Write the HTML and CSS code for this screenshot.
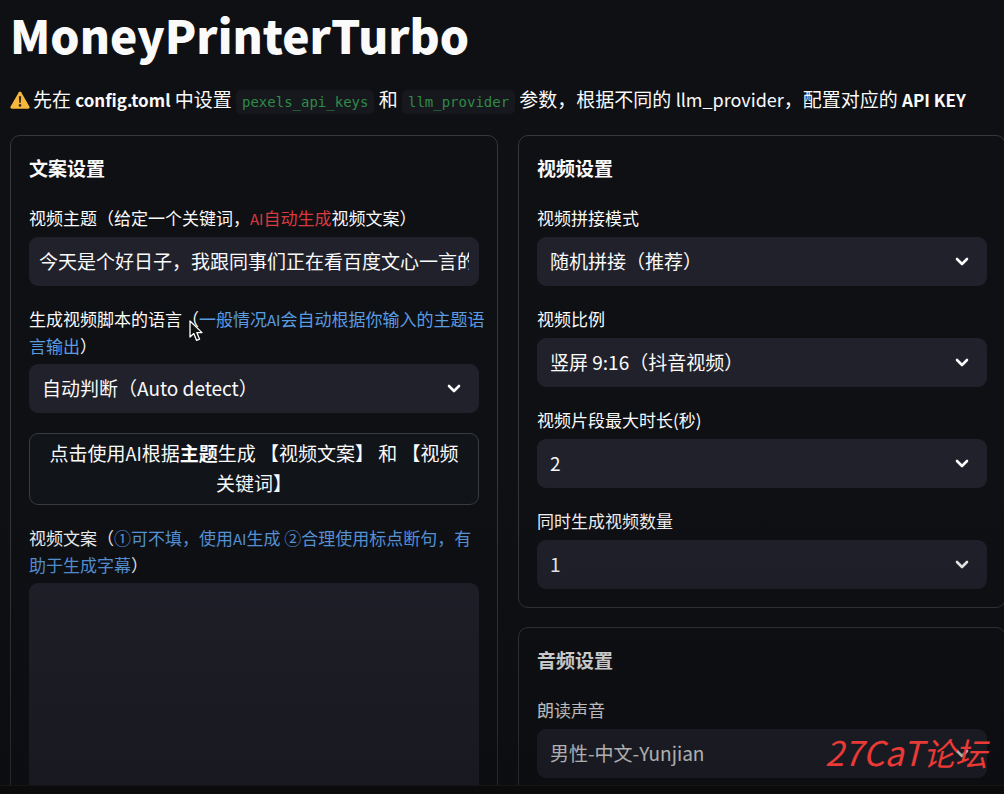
FILE: index.html
```html
<!DOCTYPE html>
<html lang="zh-CN">
<head>
  <meta charset="UTF-8">
  <meta name="viewport" content="width=device-width, initial-scale=1">
  <title>MoneyPrinterTurbo</title>
  <link rel="stylesheet" href="styles.css">
</head>
<body>
  <svg width="0" height="0" class="defs">
    <symbol id="chevron" viewBox="0 0 14 10">
      <path d="M2 2 L7 7 L12 2" fill="none" stroke="currentColor" stroke-width="2.6" stroke-linecap="round" stroke-linejoin="round"/>
    </symbol>
  </svg>

  <main class="app">
    <h1>MoneyPrinterTurbo</h1>
    <p class="notice">
      <svg class="warn" viewBox="0 0 20 18">
        <path d="M8.8 1.2 Q10 -.4 11.2 1.2 L19.4 15.6 Q20.2 17.6 18.2 17.8 H1.8 Q-.2 17.6 .6 15.6 Z" fill="#f6b73c"/>
        <path d="M8.8 5.2 H11.2 L10.7 12 H9.3 Z" fill="#33291a"/>
        <circle cx="10" cy="14.4" r="1.3" fill="#33291a"/>
      </svg>先在 <b>config.toml</b> 中设置 <code>pexels_api_keys</code> 和 <code>llm_provider</code> 参数，根据不同的 <span class="latin">llm_provider</span>，配置对应的 <b>API KEY</b>
    </p>

    <div class="columns">
      <section class="panel">
        <h2>文案设置</h2>
        <div class="field">
          <label for="subject">视频主题（给定一个关键词，<span class="red"><span class="latin">AI</span>自动生成</span>视频文案）</label>
          <input type="text" id="subject" value="今天是个好日子，我跟同事们正在看百度文心一言的发布会">
        </div>
        <div class="field">
          <label for="language">生成视频脚本的语言（<span class="blue">一般情况<span class="latin">AI</span>会自动根据你输入的主题语<br>言输出</span>）</label>
          <div class="select">
            <select id="language"><option>自动判断（Auto detect）</option></select>
            <svg><use href="#chevron"/></svg>
          </div>
          <svg class="pointer" viewBox="0 0 14 22">
            <path d="M1 1 V17 L4.8 13.6 L7.6 20.4 L10.6 19.2 L7.8 12.6 H13 Z" fill="#111" stroke="#fff" stroke-width="1.3" stroke-linejoin="round"/>
          </svg>
        </div>
        <button type="button">点击使用<span class="latin">AI</span>根据<b>主题</b>生成 【视频文案】 和 【视频<br>关键词】</button>
        <div class="field">
          <label for="script">视频文案（<span class="blue">①可不填，使用<span class="latin">AI</span>生成 ②合理使用标点断句，有<br>助于生成字幕</span>）</label>
          <textarea id="script"></textarea>
        </div>
      </section>

      <div class="stack">
        <section class="panel">
          <h2>视频设置</h2>
          <div class="field">
            <label for="concat">视频拼接模式</label>
            <div class="select">
              <select id="concat"><option>随机拼接（推荐）</option></select>
              <svg><use href="#chevron"/></svg>
            </div>
          </div>
          <div class="field">
            <label for="aspect">视频比例</label>
            <div class="select">
              <select id="aspect"><option>竖屏 9:16（抖音视频）</option></select>
              <svg><use href="#chevron"/></svg>
            </div>
          </div>
          <div class="field">
            <label for="duration">视频片段最大时长(秒)</label>
            <div class="select">
              <select id="duration"><option>2</option></select>
              <svg><use href="#chevron"/></svg>
            </div>
          </div>
          <div class="field">
            <label for="count">同时生成视频数量</label>
            <div class="select">
              <select id="count"><option>1</option></select>
              <svg><use href="#chevron"/></svg>
            </div>
          </div>
        </section>

        <section class="panel">
          <h2>音频设置</h2>
          <div class="field">
            <label for="voice">朗读声音</label>
            <div class="select">
              <select id="voice"><option>男性-中文-Yunjian</option></select>
              <svg><use href="#chevron"/></svg>
            </div>
          </div>
        </section>
      </div>
    </div>
    <div class="fade"></div>
  </main>
  <div class="bottom-bar"></div>
  <div class="watermark">27CaT<span>论坛</span></div>
</body>
</html>
```
FILE: styles.css
```css
* {
  box-sizing: border-box;
}

body {
  margin: 0;
  height: 100vh;
  display: flex;
  flex-direction: column;
  overflow: hidden;
  position: relative;
  background: #0f1014;
  color: #fafafa;
  font-family: "Noto Sans CJK SC", sans-serif;
  font-size: 19px;
}

.defs {
  position: absolute;
}

.app {
  flex: 1;
  min-height: 0;
  overflow: hidden;
  position: relative;
  padding: 0 0 0 10px;
}

.bottom-bar {
  flex: none;
  height: 9px;
  background: #0b0b0b;
  border-top: 1px solid #151515;
}

h1 {
  margin: 0;
  font-size: 46px;
  line-height: 68px;
  font-weight: 900;
}

.notice {
  margin: 16px 0 0;
  line-height: 30px;
  white-space: nowrap;
}

.warn {
  width: 20px;
  height: 18px;
  margin-right: 3px;
  vertical-align: -2px;
}

.latin {
  font-size: 18px;
}

.notice b {
  font-size: 17px;
}

code {
  padding: 4px 6px;
  border-radius: 5px;
  background: #16181d;
  color: #2f8a47;
  font-family: "DejaVu Sans Mono", monospace;
  font-size: 14px;
}

.columns {
  display: grid;
  grid-template-columns: minmax(0, 1fr) minmax(0, 1fr);
  gap: 20px;
  margin: 18px -2px 0 0;
}

.stack {
  display: flex;
  flex-direction: column;
  gap: 19px;
}

.panel {
  display: flex;
  flex-direction: column;
  gap: 20px;
  padding: 18px;
  border: 1px solid #36373c;
  border-radius: 10px;
}

h2 {
  margin: 0 0 3px;
  font-size: 19px;
  line-height: 28px;
  font-weight: 700;
}

.field {
  display: flex;
  flex-direction: column;
  gap: 5px;
  position: relative;
}

label {
  min-height: 27px;
  font-size: 17px;
  line-height: 26px;
  white-space: nowrap;
}

label .latin {
  font-size: 15px;
}

.red {
  color: #d8393f;
}

.blue {
  color: #5b9be0;
}

input,
select,
textarea {
  display: block;
  width: 100%;
  height: 49px;
  border: 0;
  border-radius: 9px;
  background: #21212c;
  color: inherit;
  font: inherit;
}

input {
  padding: 0 10px 2px;
}

select {
  appearance: none;
  padding: 0 13px 2px;
}

textarea {
  height: 300px;
  resize: none;
}

.select {
  position: relative;
}

.select svg {
  position: absolute;
  right: 18px;
  top: 20px;
  width: 14px;
  height: 10px;
  pointer-events: none;
}

button {
  padding: 4px 10px 6px;
  border: 1px solid #3a3c41;
  border-radius: 9px;
  background: #111419;
  color: inherit;
  font: inherit;
  line-height: 30px;
  white-space: nowrap;
}

.pointer {
  position: absolute;
  left: 160px;
  top: 14px;
  width: 14px;
  height: 22px;
}

.fade {
  position: absolute;
  inset: 60% 0 0 0;
  background: linear-gradient(rgba(8, 9, 10, 0), rgba(8, 9, 10, 0.35));
  pointer-events: none;
}

.watermark {
  position: absolute;
  right: 17px;
  bottom: 17px;
  color: #ea3a36;
  font-size: 34px;
  line-height: 50px;
  font-style: italic;
}

.watermark span {
  font-size: 32px;
}
```
